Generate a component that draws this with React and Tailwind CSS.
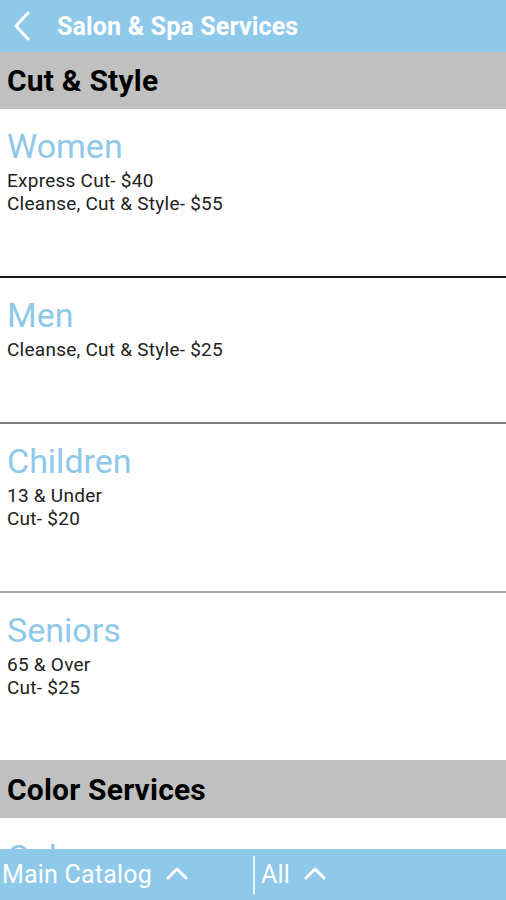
import React from 'react';

const items = [
  { title: 'Women', lines: ['Express Cut- $40', 'Cleanse, Cut & Style- $55'], divider: 'border-[#1a1a1a]' },
  { title: 'Men', lines: ['Cleanse, Cut & Style- $25'], divider: 'border-[#808080]' },
  { title: 'Children', lines: ['13 & Under', 'Cut- $20'], divider: 'border-[#a8a8a8]' },
  { title: 'Seniors', lines: ['65 & Over', 'Cut- $25'], divider: '' },
];

function ChevronUp() {
  return (
    <svg width="22" height="14" viewBox="0 0 22 14" fill="none" stroke="white" strokeWidth="3" strokeLinecap="round" strokeLinejoin="round">
      <path d="M2 12 L11 3 L20 12" />
    </svg>
  );
}

function Service({ item }) {
  return (
    <div className={`pt-[15px] pb-[61px] px-[7px] bg-white ${item.divider ? `border-b-2 ${item.divider}` : ''}`}>
      <div className="text-[34px] leading-[44px] text-[#8fc9ea]">{item.title}</div>
      <div className="mt-[1px] text-[19px] leading-[23px] tracking-[0.25px] text-[#222]">
        {item.lines.map((l) => (
          <div key={l}>{l}</div>
        ))}
      </div>
    </div>
  );
}

export default function App() {
  return (
    <div className="w-[506px] h-[900px] flex flex-col overflow-hidden bg-white" style={{ fontFamily: 'Roboto, "Noto Sans", sans-serif' }}>
      {/* Header */}
      <div className="h-[52px] shrink-0 bg-[#8fc9ea] flex items-center">
        <svg className="ml-[13px]" width="18" height="30" viewBox="0 0 18 30" fill="none" stroke="white" strokeWidth="3" strokeLinecap="round" strokeLinejoin="round">
          <path d="M15 2 L3 15 L15 28" />
        </svg>
        <div className="ml-[26px] text-white font-bold text-[25px] tracking-[0.15px] leading-none">Salon &amp; Spa Services</div>
      </div>

      <div className="flex-1 overflow-hidden">
        <div className="h-[57px] bg-[#c0c0c0] flex items-center px-[7px]">
          <span className="text-[30px] tracking-[0.2px] font-bold text-black">Cut &amp; Style</span>
        </div>
        {items.map((it) => (
          <Service key={it.title} item={it} />
        ))}
        <div className="h-[58px] bg-[#c0c0c0] flex items-center px-[7px]">
          <span className="text-[30px] tracking-[0.2px] font-bold text-black">Color Services</span>
        </div>
        <div className="pt-[17px] px-[7px]">
          <div className="text-[34px] leading-[44px] text-[#8fc9ea]">Color</div>
        </div>
      </div>

      {/* Bottom bar */}
      <div className="h-[51px] shrink-0 bg-[#8fc9ea] flex items-center text-white text-[25px] tracking-[0.2px]">
        <div className="flex items-center w-[253px] pl-[2px]">
          <span>Main Catalog</span>
          <span className="ml-[14px] mb-[3px]"><ChevronUp /></span>
        </div>
        <div className="w-[2px] h-[38px] bg-white/80" />
        <div className="flex items-center pl-[6px]">
          <span>All</span>
          <span className="ml-[14px] mb-[3px]"><ChevronUp /></span>
        </div>
      </div>
    </div>
  );
}
